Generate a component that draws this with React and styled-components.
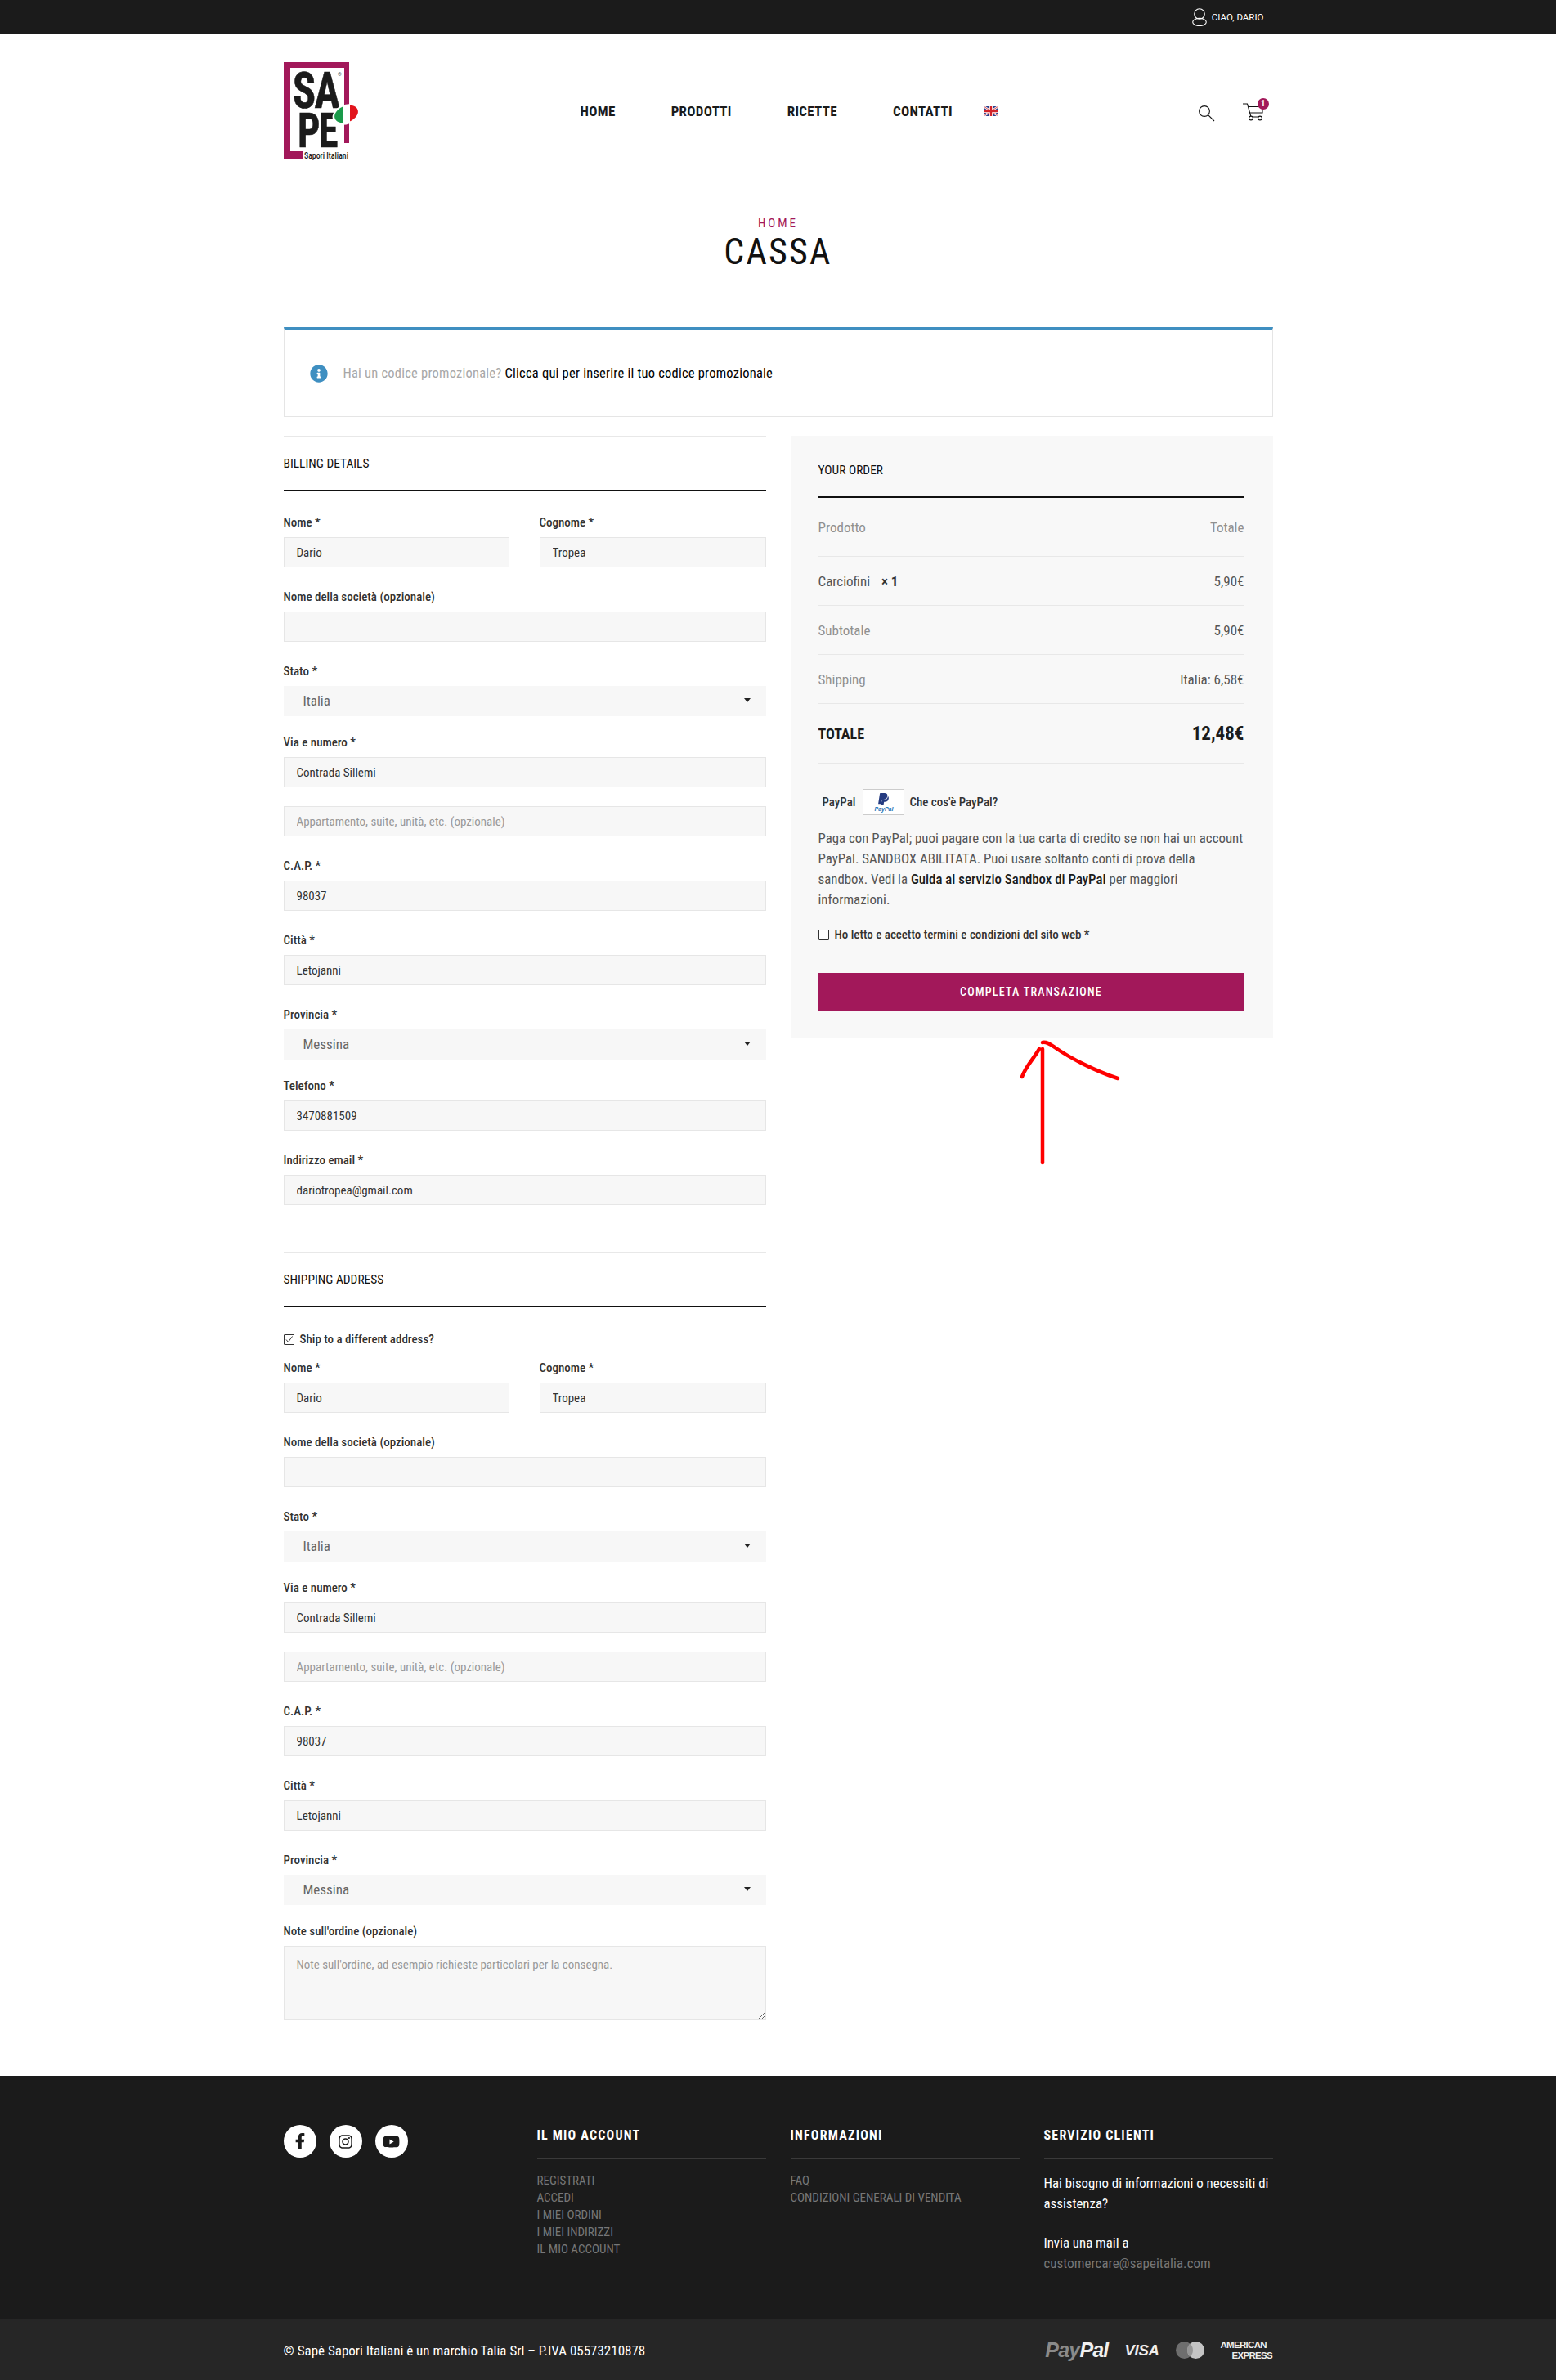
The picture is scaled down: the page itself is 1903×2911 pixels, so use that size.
import React from 'react';
import styled, { createGlobalStyle } from 'styled-components';
import { FaInfoCircle, FaFacebookF, FaInstagram, FaYoutube, FaPaypal } from 'react-icons/fa';

const MAGENTA = '#a2185a';
const FONT = '"Roboto Condensed", "Liberation Sans", sans-serif';

const GlobalStyle = createGlobalStyle`
  * { box-sizing: border-box; }
  body {
    margin: 0;
    background: #fff;
    font-family: ${FONT};
    color: #555;
  }
`;

const Page = styled.div`
  position: relative;
  width: 1903px;
`;

const Container = styled.div`
  width: 1210px;
  margin: 0 auto;
`;

/* top bar */
const TopBar = styled.div`
  height: 42px;
  background: #1b1b1b;
  border-bottom: 1px solid #444;
`;
const TopBarInner = styled(Container)`
  height: 41px;
  display: flex;
  justify-content: flex-end;
  align-items: center;
  gap: 6px;
  padding-right: 11px;
`;
const UserName = styled.span`
  font-family: Roboto, sans-serif;
  font-size: 11.5px;
  color: #fff;
`;

/* main header */
const Header = styled(Container)`
  display: flex;
  align-items: flex-start;
  padding-top: 34px;
  height: 152px;
`;
const LogoSlot = styled.div`
  width: 363px;
  flex: none;
`;
const LogoSvg = styled.svg`
  display: block;
  margin-top: -14px;
  overflow: visible;
`;
const Nav = styled.nav`
  display: flex;
  align-items: center;
  height: 20px;
  margin-top: 50px;
`;
const NavLink = styled.a`
  font-size: 17px;
  font-weight: 700;
  letter-spacing: 0.3px;
  color: #1b1b1b;
  margin-right: ${p => p.$gap || 68}px;
`;
const HeaderIcons = styled.div`
  margin-left: auto;
  display: flex;
  align-items: flex-start;
  gap: 34px;
  padding: 50px 12px 0 0;
`;
const SearchSvg = styled.svg`
  margin-top: 3px;
`;
const CartWrap = styled.div`
  position: relative;
  width: 25px;
  height: 22px;
`;
const CartBadge = styled.span`
  position: absolute;
  top: -6px;
  right: -7px;
  width: 14px;
  height: 14px;
  border-radius: 50%;
  background: ${MAGENTA};
  color: #fff;
  font-family: Roboto, sans-serif;
  font-size: 10px;
  font-weight: 700;
  line-height: 14px;
  text-align: center;
`;

/* page title */
const TitleBlock = styled.div`
  text-align: center;
  padding-top: 69px;
`;
const Crumb = styled.div`
  font-size: 15px;
  line-height: 20px;
  letter-spacing: 3px;
  color: ${MAGENTA};
`;
const PageTitle = styled.h1`
  margin: 0;
  font-size: 44px;
  font-weight: 400;
  line-height: 50px;
  letter-spacing: 2.2px;
  color: #111;
`;

/* coupon notice */
const Notice = styled.div`
  margin-top: 67px;
  height: 110px;
  display: flex;
  align-items: center;
  gap: 19px;
  padding-left: 31px;
  border: 1px solid #e5e5e5;
  border-top: 4px solid #3f8fc1;
  font-size: 16.5px;
  letter-spacing: 0.22px;
  color: #a8a8a8;
`;
const NoticeLink = styled.a`
  color: #000;
`;

const Columns = styled.div`
  margin-top: 23px;
  display: grid;
  grid-template-columns: 590px 590px;
  column-gap: 30px;
  align-items: start;
  padding-bottom: 68px;
`;

/* form */
const SectionTitle = styled.h3`
  margin: 0;
  height: 68px;
  padding-top: 23px;
  border-top: 1px solid #e8e8e8;
  border-bottom: 2px solid #111;
  font-size: 15.4px;
  font-weight: 400;
  line-height: 20px;
  color: #111;
`;
const FieldList = styled.div`
  margin-top: 29px;
`;
const Field = styled.div`
  margin-bottom: ${p => (p.$gap === undefined ? 27 : p.$gap)}px;
`;
const Label = styled.label`
  display: block;
  height: 18px;
  margin-bottom: 9px;
  font-size: 15px;
  font-weight: 500;
  line-height: 18px;
  color: #333;
`;
const TwoCols = styled.div`
  display: grid;
  grid-template-columns: 276px 277px;
  column-gap: 37px;
`;
const Input = styled.input`
  display: block;
  width: 100%;
  height: 37px;
  padding: 0 15px;
  background: #f7f7f7;
  border: 1px solid #e6e6e6;
  border-radius: 0;
  outline: none;
  font-family: ${FONT};
  font-size: 15px;
  color: #333;
  &::placeholder { color: #999; opacity: 1; }
`;
const Select = styled.div`
  height: 37px;
  padding: 0 19px 2px 24px;
  display: flex;
  align-items: center;
  justify-content: space-between;
  background: #f7f7f7;
  font-size: 17px;
  color: #666;
`;
const Caret = styled.span`
  width: 0;
  height: 0;
  border-left: 4px solid transparent;
  border-right: 4px solid transparent;
  border-top: 5px solid #222;
`;
const TextArea = styled.textarea`
  display: block;
  width: 100%;
  height: 91px;
  padding: 13px 15px;
  background: #f7f7f7;
  border: 1px solid #e6e6e6;
  border-radius: 0;
  outline: none;
  font-family: ${FONT};
  font-size: 15px;
  &::placeholder { color: #999; opacity: 1; }
`;
const ShippingBlock = styled.div`
  margin-top: 57px;
`;
const CheckRow = styled.label`
  display: flex;
  align-items: center;
  gap: 7px;
  height: 18px;
  margin: ${p => p.$margin};
  font-size: 15px;
  font-weight: 500;
  color: #333;
`;
const CheckBox = styled.span`
  width: 13px;
  height: 13px;
  flex: none;
  display: flex;
  border: 1px solid #333;
  border-radius: 1px;
  background: #fff;
`;

/* order panel */
const OrderPanel = styled.div`
  height: 737px;
  padding: 0 35px 0 34px;
  background: #f8f8f8;
`;
const OrderTitle = styled.h3`
  margin: 0;
  height: 76px;
  padding-top: 32px;
  border-bottom: 2px solid #111;
  font-size: 15.4px;
  font-weight: 400;
  line-height: 20px;
  color: #111;
`;
const OrderRow = styled.div`
  height: ${p => p.$height || 60}px;
  display: flex;
  align-items: center;
  justify-content: space-between;
  border-bottom: 1px solid #e8e8e8;
  font-size: 17px;
  color: #555;
`;
const RowLabel = styled.span`
  color: #909090;
`;
const Qty = styled.strong`
  margin-left: 10px;
  font-weight: 700;
  color: #333;
`;
const TotalLabel = styled.span`
  font-size: 18px;
  font-weight: 700;
  color: #1b1b1b;
`;
const TotalValue = styled.span`
  font-size: 23px;
  font-weight: 700;
  color: #1b1b1b;
`;
const PayRow = styled.div`
  margin-top: 31px;
  height: 32px;
  display: flex;
  align-items: center;
  padding-left: 5px;
  font-size: 15px;
  font-weight: 500;
  color: #333;
`;
const PayBadge = styled.span`
  width: 51px;
  height: 32px;
  margin: 0 6px 0 9px;
  display: flex;
  flex-direction: column;
  align-items: center;
  padding-top: 3px;
  background: #fff;
  border: 1px solid #ccc;
  color: #253b80;
`;
const PayBadgeText = styled.span`
  font-family: "Liberation Sans", sans-serif;
  font-size: 7px;
  font-style: italic;
  font-weight: 700;
  line-height: 8px;
  color: #1b6fb5;
`;
const PayText = styled.p`
  margin: 16px 0 0;
  font-size: 16.85px;
  line-height: 25px;
  color: #555;
`;
const PayLink = styled.a`
  font-weight: 500;
  color: #1b1b1b;
`;
const SubmitButton = styled.button`
  display: block;
  width: 100%;
  height: 46px;
  margin-top: 38px;
  background: ${MAGENTA};
  border: 0;
  font-family: ${FONT};
  font-size: 14px;
  font-weight: 500;
  letter-spacing: 1.25px;
  text-transform: uppercase;
  color: #fff;
`;

/* hand drawn arrow lying over the page */
const ArrowOverlay = styled.svg`
  position: absolute;
  left: 1240px;
  top: 1265px;
`;

/* footer */
const Footer = styled.footer`
  height: 298px;
  background: #1b1b1b;
  padding-top: 60px;
`;
const FooterGrid = styled(Container)`
  display: grid;
  grid-template-columns: repeat(4, 280px);
  column-gap: 30px;
`;
const Socials = styled.div`
  display: flex;
  gap: 16px;
`;
const SocialLink = styled.a`
  width: 40px;
  height: 40px;
  border-radius: 50%;
  background: #fff;
  color: #1b1b1b;
  display: flex;
  align-items: center;
  justify-content: center;
  font-size: ${p => p.$size}px;
`;
const FooterHeading = styled.h4`
  margin: 3px 0 0;
  height: 39px;
  border-bottom: 1px solid #3a3a3a;
  font-size: 16px;
  font-weight: 700;
  line-height: 20px;
  letter-spacing: 1.2px;
  color: #fff;
`;
const FooterLinks = styled.div`
  margin-top: 16px;
  display: flex;
  flex-direction: column;
`;
const FooterLink = styled.a`
  font-size: 15px;
  line-height: 21px;
  color: #777;
`;
const FooterText = styled.p`
  margin: 17px 0 23px;
  font-size: 16.85px;
  line-height: 25px;
  color: #fff;
  & + & { margin-top: 0; }
`;
const Mail = styled.a`
  letter-spacing: 0.08px;
  color: #777;
`;
const BottomBar = styled.div`
  height: 75px;
  background: #262626;
`;
const BottomInner = styled(Container)`
  height: 75px;
  display: flex;
  align-items: center;
  justify-content: space-between;
  font-size: 17px;
  color: #fff;
`;
const PayLogos = styled.div`
  display: flex;
  align-items: center;
  gap: 20px;
  font-family: "Liberation Sans", sans-serif;
`;
const PayPalMark = styled.span`
  font-size: 25px;
  font-style: italic;
  font-weight: 700;
  letter-spacing: -0.8px;
  color: #f0f0f0;
`;
const PayPalGrey = styled.span`
  color: #8a8a8a;
`;
const VisaMark = styled.span`
  font-size: 18.5px;
  font-style: italic;
  font-weight: 700;
  letter-spacing: -0.3px;
  color: #eee;
`;
const AmexMark = styled.span`
  width: 64px;
  display: flex;
  flex-direction: column;
  font-size: 11.5px;
  font-weight: 700;
  line-height: 12.5px;
  letter-spacing: -0.7px;
  color: #eee;
`;
const AmexLine = styled.span`
  padding-left: ${p => p.$indent || 0}px;
`;

const UserIcon = () => (
  <svg width="18" height="22" viewBox="0 0 18 22" fill="none" stroke="#fff" strokeWidth="1.1">
    <circle cx="9" cy="7" r="6.3" />
    <ellipse cx="9" cy="17" rx="8.3" ry="4.6" />
  </svg>
);

const SearchIcon = () => (
  <SearchSvg width="20" height="20" viewBox="0 0 20 20" fill="none" stroke="#111" strokeWidth="1.1">
    <circle cx="7" cy="7" r="6.4" />
    <path d="M11.6 11.6 L19 19" />
  </SearchSvg>
);

const CartIcon = () => (
  <svg width="25" height="22" viewBox="0 0 25 22" fill="none" stroke="#111" strokeWidth="1.1">
    <path d="M0 1 H5.5 L10 17 H24" />
    <path d="M6.5 4.5 H24 V12 H8.5" />
    <circle cx="10" cy="18.5" r="2.4" fill="#fff" />
    <circle cx="21" cy="18.5" r="2.4" fill="#fff" />
  </svg>
);

const FlagUK = () => (
  <svg width="18" height="12" viewBox="0 0 18 12">
    <rect width="18" height="12" fill="#2b3f8c" />
    <path d="M0 0 L18 12 M18 0 L0 12" stroke="#fff" strokeWidth="2.4" />
    <path d="M0 0 L18 12 M18 0 L0 12" stroke="#d2232a" strokeWidth="0.8" />
    <path d="M9 0 V12 M0 6 H18" stroke="#fff" strokeWidth="4" />
    <path d="M9 0 V12 M0 6 H18" stroke="#d2232a" strokeWidth="2.4" />
  </svg>
);

const Logo = () => (
  <LogoSvg width="92" height="134" viewBox="0 -14 92 134">
    <defs>
      <clipPath id="heart">
        <ellipse cx="76.5" cy="63.5" rx="15" ry="10" transform="rotate(-22 76.5 63.5)" />
      </clipPath>
    </defs>
    <path d="M0 0 H80 V99 H74 V7 H8 V109 H23 V118 H0 Z" fill={MAGENTA} />
    <text x="11" y="56" fontFamily={FONT} fontWeight="700" fontSize="62" letterSpacing="-2" stroke="#1b1b1b" strokeWidth="0.6" fill="#1b1b1b" textLength="56" lengthAdjust="spacingAndGlyphs">SA</text>
    <text x="17" y="104" fontFamily={FONT} fontWeight="700" fontSize="59" letterSpacing="-2" stroke="#1b1b1b" strokeWidth="0.6" fill="#1b1b1b" textLength="48" lengthAdjust="spacingAndGlyphs">PE</text>
    <text x="25" y="118" fontFamily={FONT} fontWeight="500" fontSize="10.5" fill="#1b1b1b" textLength="54" lengthAdjust="spacingAndGlyphs">Sapori Italiani</text>
    <text x="66" y="17" fontFamily={FONT} fontSize="6" fill="#1b1b1b">®</text>
    <ellipse cx="76" cy="64" rx="17" ry="12" transform="rotate(-22 76 64)" fill="#fff" />
    <g clipPath="url(#heart)">
      <rect x="60" y="50" width="13" height="30" fill="#1a9a4a" />
      <rect x="73" y="50" width="8" height="30" fill="#fff" />
      <rect x="81" y="50" width="12" height="30" fill="#e2141c" />
    </g>
  </LogoSvg>
);

const AddressFields = () => (
  <>
    <TwoCols>
      <Field>
        <Label>Nome *</Label>
        <Input readOnly value="Dario" />
      </Field>
      <Field>
        <Label>Cognome *</Label>
        <Input readOnly value="Tropea" />
      </Field>
    </TwoCols>
    <Field>
      <Label>Nome della società (opzionale)</Label>
      <Input readOnly value="" />
    </Field>
    <Field $gap={23}>
      <Label>Stato *</Label>
      <Select>Italia<Caret /></Select>
    </Field>
    <Field $gap={23}>
      <Label>Via e numero *</Label>
      <Input readOnly value="Contrada Sillemi" />
    </Field>
    <Field>
      <Input readOnly placeholder="Appartamento, suite, unità, etc. (opzionale)" />
    </Field>
    <Field>
      <Label>C.A.P. *</Label>
      <Input readOnly value="98037" />
    </Field>
    <Field>
      <Label>Città *</Label>
      <Input readOnly value="Letojanni" />
    </Field>
    <Field $gap={23}>
      <Label>Provincia *</Label>
      <Select>Messina<Caret /></Select>
    </Field>
  </>
);

const accountLinks = ['REGISTRATI', 'ACCEDI', 'I MIEI ORDINI', 'I MIEI INDIRIZZI', 'IL MIO ACCOUNT'];
const infoLinks = ['FAQ', 'CONDIZIONI GENERALI DI VENDITA'];

export default function App() {
  return (
    <Page>
      <GlobalStyle />
      <TopBar>
        <TopBarInner>
          <UserIcon />
          <UserName>CIAO, DARIO</UserName>
        </TopBarInner>
      </TopBar>

      <Header>
        <LogoSlot><Logo /></LogoSlot>
        <Nav>
          <NavLink>HOME</NavLink>
          <NavLink>PRODOTTI</NavLink>
          <NavLink>RICETTE</NavLink>
          <NavLink $gap={38}>CONTATTI</NavLink>
          <FlagUK />
        </Nav>
        <HeaderIcons>
          <SearchIcon />
          <CartWrap>
            <CartIcon />
            <CartBadge>1</CartBadge>
          </CartWrap>
        </HeaderIcons>
      </Header>

      <TitleBlock>
        <Crumb>HOME</Crumb>
        <PageTitle>CASSA</PageTitle>
      </TitleBlock>

      <Container>
        <Notice>
          <FaInfoCircle size={22} color="#3f8fc1" />
          <span>Hai un codice promozionale? <NoticeLink>Clicca qui per inserire il tuo codice promozionale</NoticeLink></span>
        </Notice>

        <Columns>
          <div>
            <SectionTitle>BILLING DETAILS</SectionTitle>
            <FieldList>
              <AddressFields />
              <Field>
                <Label>Telefono *</Label>
                <Input readOnly value="3470881509" />
              </Field>
              <Field>
                <Label>Indirizzo email *</Label>
                <Input readOnly value="dariotropea@gmail.com" />
              </Field>
            </FieldList>
            <ShippingBlock>
              <SectionTitle>SHIPPING ADDRESS</SectionTitle>
              <CheckRow $margin="30px 0 17px">
                <CheckBox>
                  <svg width="11" height="11" viewBox="0 0 11 11" fill="none" stroke="#333" strokeWidth="1">
                    <path d="M2 5.5 L4.5 8.5 L9.5 1.5" />
                  </svg>
                </CheckBox>
                Ship to a different address?
              </CheckRow>
              <AddressFields />
              <Field $gap={0}>
                <Label>Note sull'ordine (opzionale)</Label>
                <TextArea readOnly placeholder="Note sull'ordine, ad esempio richieste particolari per la consegna." />
              </Field>
            </ShippingBlock>
          </div>

          <OrderPanel>
            <OrderTitle>YOUR ORDER</OrderTitle>
            <OrderRow $height={72}><RowLabel>Prodotto</RowLabel><RowLabel>Totale</RowLabel></OrderRow>
            <OrderRow><span>Carciofini <Qty>× 1</Qty></span><span>5,90€</span></OrderRow>
            <OrderRow><RowLabel>Subtotale</RowLabel><span>5,90€</span></OrderRow>
            <OrderRow><RowLabel>Shipping</RowLabel><span>Italia: 6,58€</span></OrderRow>
            <OrderRow $height={73}><TotalLabel>TOTALE</TotalLabel><TotalValue>12,48€</TotalValue></OrderRow>
            <PayRow>
              PayPal
              <PayBadge>
                <FaPaypal size={17} />
                <PayBadgeText>PayPal</PayBadgeText>
              </PayBadge>
              Che cos'è PayPal?
            </PayRow>
            <PayText>
              Paga con PayPal; puoi pagare con la tua carta di credito se non hai un account<br />
              PayPal. SANDBOX ABILITATA. Puoi usare soltanto conti di prova della<br />
              sandbox. Vedi la <PayLink>Guida al servizio Sandbox di PayPal</PayLink> per maggiori<br />
              informazioni.
            </PayText>
            <CheckRow $margin="21px 0 0">
              <CheckBox />
              Ho letto e accetto termini e condizioni del sito web *
            </CheckRow>
            <SubmitButton>Completa transazione</SubmitButton>
          </OrderPanel>
        </Columns>
      </Container>

      <Footer>
        <FooterGrid>
          <Socials>
            <SocialLink $size={20}><FaFacebookF /></SocialLink>
            <SocialLink $size={19}><FaInstagram /></SocialLink>
            <SocialLink $size={21}><FaYoutube /></SocialLink>
          </Socials>
          <div>
            <FooterHeading>IL MIO ACCOUNT</FooterHeading>
            <FooterLinks>
              {accountLinks.map(l => <FooterLink key={l}>{l}</FooterLink>)}
            </FooterLinks>
          </div>
          <div>
            <FooterHeading>INFORMAZIONI</FooterHeading>
            <FooterLinks>
              {infoLinks.map(l => <FooterLink key={l}>{l}</FooterLink>)}
            </FooterLinks>
          </div>
          <div>
            <FooterHeading>SERVIZIO CLIENTI</FooterHeading>
            <FooterText>Hai bisogno di informazioni o necessiti di assistenza?</FooterText>
            <FooterText>Invia una mail a<br /><Mail>customercare@sapeitalia.com</Mail></FooterText>
          </div>
        </FooterGrid>
      </Footer>
      <BottomBar>
        <BottomInner>
          <span>© Sapè Sapori Italiani è un marchio Talia Srl – P.IVA 05573210878</span>
          <PayLogos>
            <PayPalMark><PayPalGrey>Pay</PayPalGrey>Pal</PayPalMark>
            <VisaMark>VISA</VisaMark>
            <svg width="35" height="21" viewBox="0 0 35 21">
              <circle cx="10.5" cy="10.5" r="10.5" fill="#6e6e6e" />
              <circle cx="24.5" cy="10.5" r="10.5" fill="#c4c4c4" />
              <path d="M17.5 2.7 a10.5 10.5 0 0 1 0 15.6 a10.5 10.5 0 0 1 0 -15.6" fill="#969696" />
            </svg>
            <AmexMark>
              <AmexLine>AMERICAN</AmexLine>
              <AmexLine $indent={14}>EXPRESS</AmexLine>
            </AmexMark>
          </PayLogos>
        </BottomInner>
      </BottomBar>

      <ArrowOverlay width="140" height="170" viewBox="0 0 140 170" fill="none" stroke="#f00" strokeWidth="4.5" strokeLinecap="round">
        <path d="M35 18 V157" />
        <path d="M31 18 C24 30 14 40 10 52" />
        <path d="M35 10 C40 9 44 12 50 16 C70 30 100 45 127 54" />
      </ArrowOverlay>
    </Page>
  );
}
